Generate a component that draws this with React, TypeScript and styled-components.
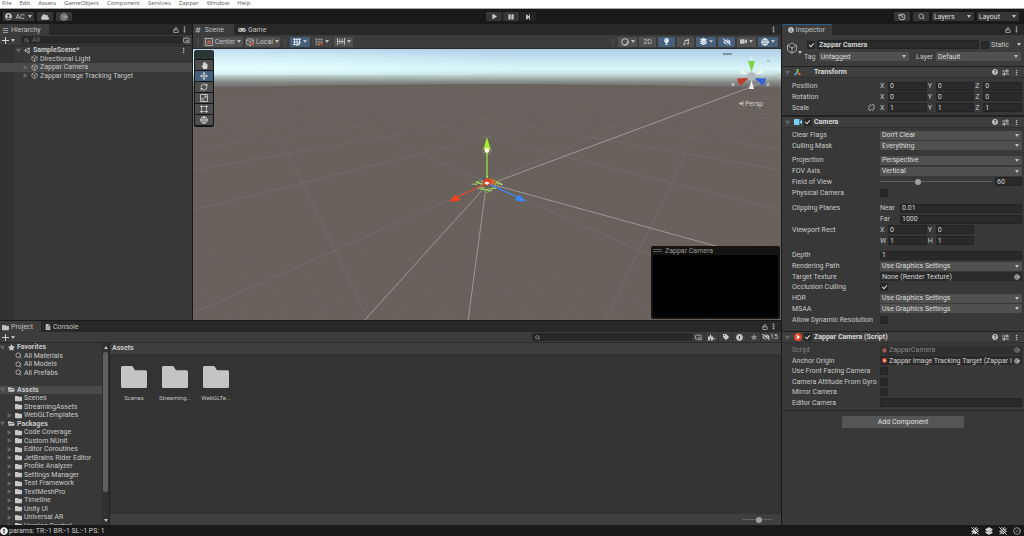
import React from "react";
import styled, { createGlobalStyle, css } from "styled-components";
import {
  Box, Search, History, LockOpen, EllipsisVertical, Move, RefreshCw, Unlink,
  Menu as MenuIcon, PictureInPicture2, CircleCheck, BugOff, Layers2, Globe, Target,
} from "lucide-react";
import {
  FaGamepad, FaUserCircle, FaEyeSlash, FaVideo, FaLightbulb, FaStar, FaTag, FaFolder, FaFolderOpen,
  FaQuestionCircle, FaExclamationCircle, FaInfoCircle, FaCloud, FaUnity, FaHashtag, FaHandPaper, FaPlay,
  FaPause, FaStepForward, FaPuzzlePiece, FaMusic, FaLayerGroup, FaFileAlt,
} from "react-icons/fa";

const Global = createGlobalStyle`
  * { box-sizing: border-box; }
  body { margin: 0; background: #191919; }
  button, input, select { font: inherit; color: inherit; margin: 0; padding: 0; border: 0; border-radius: 0; background: none; min-width: 0; }
  ul { list-style: none; margin: 0; padding: 0; }
  svg { display: block; flex: none; }
`;

const Editor = styled.div`
  height: 100vh;
  display: flex;
  flex-direction: column;
  font: 7px/8px Roboto, "Liberation Sans", sans-serif;
  color: #c8c8c8;
  background: #191919;
  overflow: hidden;
`;

/* ---------- application chrome ---------- */

const MenuBar = styled.nav`
  display: flex;
  gap: 8px;
  height: 9px;
  padding-left: 2px;
  background: #fff;
  border-bottom: 1px solid #a8a8a8;
  font: 6px/8px "Open Sans", "Noto Sans", sans-serif;
  align-items: center;
`;
const MenuLink = styled.a`
  color: #555;
  text-decoration: none;
  line-height: 7px;
  margin-top: -2px;
`;
const TopBar = styled.header`
  display: grid;
  grid-template-columns: 1fr auto 1fr;
  align-items: center;
  height: 15px;
  padding: 0 5px 0 3px;
`;
const BarGroup = styled.div<{ $gap: number; $end?: boolean }>`
  display: flex;
  gap: ${(p) => p.$gap}px;
  justify-content: ${(p) => (p.$end ? "flex-end" : "flex-start")};
`;
const BarButton = styled.button<{ $w: number; $dim?: boolean }>`
  width: ${(p) => p.$w}px;
  height: 9px;
  display: flex;
  align-items: center;
  justify-content: center;
  gap: 3px;
  border-radius: 1px;
  background: ${(p) => (p.$dim ? "#252525" : "#363636")};
  color: #c8c8c8;
`;
const Caret = styled.i<{ $up?: boolean }>`
  width: 0;
  height: 0;
  border: 2px solid transparent;
  border-top: 3px solid #c0c0c0;
  border-bottom: 0;
  flex: none;
  ${(p) => p.$up && css`border-top: 0; border-bottom: 3px solid #c0c0c0;`}
`;

/* ---------- docked windows ---------- */

const Workspace = styled.main`
  flex: 1;
  min-height: 0;
  display: grid;
  grid-template-columns: minmax(0, 1fr) 242px;
  gap: 1px;
`;
const LeftDock = styled.div`
  display: grid;
  grid-template-rows: minmax(0, 1fr) 204px;
  gap: 1px;
  min-height: 0;
`;
const UpperDock = styled.div`
  display: grid;
  grid-template-columns: 192px minmax(0, 1fr);
  gap: 1px;
  min-height: 0;
`;
const Panel = styled.section`
  display: flex;
  flex-direction: column;
  background: #383838;
  min-width: 0;
  min-height: 0;
  overflow: hidden;
`;
const TabRow = styled.div`
  display: flex;
  flex: none;
  height: 11px;
  padding-right: 4px;
  gap: 2px;
  align-items: center;
  background: #282828;
  color: #c0c0c0;
`;
const Tab = styled.button<{ $on?: boolean; $w: number; $focus?: boolean }>`
  width: ${(p) => p.$w}px;
  height: 11px;
  display: flex;
  align-items: center;
  gap: 2px;
  padding-left: 2px;
  white-space: nowrap;
  background: ${(p) => (p.$on ? "#3c3c3c" : "transparent")};
  border-top: 1px solid ${(p) => (p.$focus ? "#2c5d87" : "transparent")};
`;
const Spacer = styled.span`
  flex: 1;
`;
const ToolRow = styled.div<{ $h: number }>`
  display: flex;
  align-items: center;
  height: ${(p) => p.$h}px;
  flex: none;
  background: #3c3c3c;
  border-bottom: 1px solid #2a2a2a;
  padding: 0 2px;
`;
const AddButton = styled.button`
  display: flex;
  align-items: center;
  gap: 2px;
  width: 19px;
  height: 9px;
`;
const SearchBox = styled.label<{ $w?: number }>`
  display: flex;
  align-items: center;
  gap: 3px;
  height: 8px;
  padding-left: 3px;
  background: #282828;
  border-radius: 2px;
  color: #8a8a8a;
  ${(p) => (p.$w ? css`width: ${p.$w}px;` : css`flex: 1;`)}
  input { flex: 1; outline: 0; height: 8px; }
  input::placeholder { color: #6c6c6c; opacity: 1; }
`;

/* ---------- trees ---------- */

const TreeList = styled.ul<{ $h: number }>`
  display: grid;
  grid-auto-rows: 1fr;
  height: ${(p) => p.$h}px;
  flex: none;
`;
const TreeRow = styled.li<{ $indent: number; $on?: boolean; $bold?: boolean }>`
  display: flex;
  align-items: center;
  gap: 2px;
  min-height: 0;
  padding-left: ${(p) => p.$indent}px;
  padding-right: 5px;
  white-space: nowrap;
  font-weight: ${(p) => (p.$bold ? 700 : 400)};
  background: ${(p) => (p.$on ? "#4a4a4a" : "transparent")};
`;
const Fold = styled.span`
  width: 6px;
  flex: none;
  color: #686868;
`;
const HierarchyBody = styled.div`
  flex: 1;
  background: linear-gradient(90deg, #323232 15px, #383838 15px);
`;

/* ---------- scene view ---------- */

const SceneBar = styled(ToolRow)`
  gap: 2px;
  padding: 0 3px 0 2px;
`;
const Chip = styled.button<{ $w: number; $on?: boolean; $flat?: boolean }>`
  width: ${(p) => p.$w}px;
  height: 10px;
  flex: none;
  display: flex;
  align-items: center;
  justify-content: center;
  gap: 2px;
  border-radius: 1px;
  background: ${(p) => (p.$on ? "#46607c" : p.$flat ? "#424242" : "#505050")};
  color: ${(p) => (p.$on ? "#e6eef5" : "#c4c4c4")};
`;
const Grip = styled.span`
  width: 2px;
  height: 8px;
  margin: 0 2px;
  background: #484848;
`;
const Viewport = styled.div`
  position: relative;
  flex: 1;
  min-height: 0;
  background: #68615c;
  > svg { width: 100%; height: 100%; }
`;
const ToolStrip = styled.div`
  position: absolute;
  left: 1px;
  top: 1px;
  width: 20px;
  padding: 10px 1px 2px;
  display: grid;
  gap: 1px;
  background: linear-gradient(#2b3535 9px, #151515 9px);
  border-radius: 2px;
`;
const ToolButton = styled.button<{ $on?: boolean }>`
  height: 10px;
  display: grid;
  place-items: center;
  background: ${(p) => (p.$on ? "#46607c" : "#4e4e4e")};
  color: #d8d8d8;
`;
const Preview = styled.div`
  position: absolute;
  right: 1px;
  bottom: 1px;
  width: 129px;
  height: 73px;
  display: flex;
  flex-direction: column;
  background: #161412;
  border-radius: 2px;
  padding: 0 2px 2px;
  color: #9a9896;
`;
const PreviewTitle = styled.div`
  display: flex;
  gap: 3px;
  align-items: center;
  height: 9px;
`;
const PreviewImage = styled.div`
  flex: 1;
  background: #000;
`;

/* ---------- project window ---------- */

const ProjectBody = styled.div`
  flex: 1;
  min-height: 0;
  display: grid;
  grid-template-columns: 102px 8px minmax(0, 1fr);
`;
const TreePane = styled.div`
  overflow: hidden;
  min-height: 0;
`;
const ScrollTrack = styled.div`
  display: flex;
  flex-direction: column;
  align-items: center;
  justify-content: space-between;
  background: #313131;
  padding: 3px 0;
  border-right: 1px solid #222;
`;
const ScrollThumb = styled.div`
  width: 5px;
  flex: 1;
  margin: 3px 0 27px;
  border-radius: 3px;
  background: #5f5f5f;
`;
const Browser = styled.div`
  display: flex;
  flex-direction: column;
  background: #333;
  min-width: 0;
`;
const Crumb = styled.div`
  height: 11px;
  padding: 1px 2px;
  font-weight: 700;
  background: #3f3f3f;
`;
const AssetGrid = styled.div`
  flex: 1;
  display: flex;
  gap: 7px;
  padding: 12px 7px;
`;
const Asset = styled.figure`
  margin: 0;
  width: 34px;
  display: flex;
  flex-direction: column;
  align-items: center;
  gap: 6px;
  font-size: 6px;
  color: #c0c0c0;
`;
const BrowserFoot = styled.div`
  display: flex;
  align-items: center;
  justify-content: flex-end;
  height: 11px;
  padding-right: 9px;
  background: #3f3f3f;
`;
const Slider = styled.input<{ $w?: number }>`
  appearance: none;
  height: 8px;
  ${(p) => (p.$w ? css`width: ${p.$w}px;` : css`flex: 1;`)}
  background: linear-gradient(#606060, #606060) center / 100% 1px no-repeat;
  &::-webkit-slider-thumb {
    appearance: none;
    width: 6px;
    height: 6px;
    border-radius: 50%;
    background: #a0a0a0;
  }
`;
const FilterButton = styled.button<{ $w: number }>`
  width: ${(p) => p.$w}px;
  height: 10px;
  display: flex;
  align-items: center;
  justify-content: center;
  border-left: 1px solid #303030;
`;

/* ---------- inspector ---------- */

const ObjectHead = styled.div`
  display: grid;
  grid-template-columns: 18px minmax(0, 1fr);
  height: 31px;
  padding: 5px 3px 0 4px;
  background: #3c3c3c;
`;
const ObjectIcon = styled.div`
  display: flex;
  align-items: flex-end;
  height: 14px;
`;
const HeadLines = styled.div`
  display: grid;
  grid-template-columns: minmax(0, 1fr);
  gap: 3px;
  align-content: start;
`;
const HeadLine = styled.div<{ $gap: number; $pad?: number }>`
  display: flex;
  align-items: center;
  gap: ${(p) => p.$gap}px;
  padding-left: ${(p) => p.$pad ?? 0}px;
  height: 9px;
`;
const StaticLabel = styled.label`
  width: 24px;
  flex: none;
`;
const CompHead = styled.header`
  display: flex;
  flex: none;
  align-items: center;
  gap: 1px;
  height: 12px;
  padding: 0 4px 0 1px;
  background: #3e3e3e;
  border-top: 1px solid #1f1f1f;
  border-bottom: 1px solid #303030;
  h2 { margin: 0; font: inherit; font-weight: 700; color: #dadada; flex: 1; padding-left: 1px; }
`;
const HeadSlot = styled.span`
  width: 9px;
  display: grid;
  place-items: center;
`;
const HeadTools = styled.span`
  display: flex;
  gap: 4px;
  align-items: center;
`;
const Fields = styled.div<{ $h: number; $top?: number }>`
  display: grid;
  flex: none;
  grid-auto-rows: 1fr;
  height: ${(p) => p.$h}px;
  margin-top: ${(p) => p.$top ?? 0}px;
  padding: 0 2px 0 10px;
`;
const Field = styled.div<{ $dim?: boolean }>`
  display: grid;
  grid-template-columns: 88px minmax(0, 1fr);
  align-items: center;
  min-height: 0;
  white-space: nowrap;
  opacity: ${(p) => (p.$dim ? 0.5 : 1)};
`;
const FieldName = styled.label`
  display: flex;
  justify-content: space-between;
  align-items: center;
  padding-right: 5px;
`;
const Axes = styled.div`
  display: grid;
  grid-template-columns: repeat(3, minmax(0, 1fr));
  gap: 1px;
`;
const Axis = styled.label<{ $lab?: number }>`
  display: grid;
  grid-template-columns: ${(p) => p.$lab ?? 8}px minmax(0, 1fr);
  align-items: center;
`;
const TextField = styled.input<{ $bold?: boolean }>`
  width: 100%;
  height: 9px;
  padding-left: 1px;
  background: #2a2a2a;
  border: 1px solid #232323;
  border-radius: 1px;
  color: #d2d2d2;
  font-weight: ${(p) => (p.$bold ? 700 : 400)};
`;
const SmallField = styled.span`
  width: 27px;
  flex: none;
`;
const SelectWrap = styled.span<{ $bar?: boolean; $w?: number }>`
  display: grid;
  grid-template-columns: minmax(0, 1fr) 7px;
  align-items: center;
  height: 9px;
  ${(p) => (p.$w ? css`width: ${p.$w}px;` : css`flex: 1;`)}
  background: ${(p) => (p.$bar ? "#363636" : "#505050")};
  border-radius: 1px;
  color: #dcdcdc;
  select { grid-area: 1 / 1 / 2 / 3; appearance: none; height: 9px; padding-left: 2px; outline: 0; width: 100%; }
  i { grid-area: 1 / 2; pointer-events: none; }
`;
const Check = styled.input`
  appearance: none;
  width: 8px;
  height: 8px;
  flex: none;
  display: grid;
  place-items: center;
  background: #292929;
  border: 1px solid #242424;
  border-radius: 1px;
  &:checked::after {
    content: "";
    width: 2px;
    height: 4px;
    border: solid #dcdcdc;
    border-width: 0 1px 1px 0;
    box-sizing: content-box;
    transform: rotate(42deg);
    margin-top: -1px;
  }
`;
const ObjectField = styled.div`
  display: flex;
  align-items: center;
  gap: 2px;
  height: 9px;
  padding: 0 2px;
  background: #2a2a2a;
  border-radius: 1px;
  color: #d2d2d2;
  span { flex: 1; overflow: hidden; }
`;
const AddComponent = styled.button`
  display: block;
  width: 122px;
  height: 12px;
  margin: 5px auto 0;
  background: #555;
  color: #e0e0e0;
  border-radius: 1px;
`;
const FieldRow = styled.div`
  display: flex;
  align-items: center;
  gap: 3px;
`;
const Rule = styled.hr`
  margin: 2px 0 0;
  border: 0;
  border-top: 1px solid #242424;
  width: 100%;
`;
const StatusBar = styled.footer`
  display: flex;
  align-items: center;
  gap: 1px;
  height: 11px;
  padding: 0 3px 0 0;
  color: #d0d0d0;
`;
const StatusIcons = styled.span`
  display: flex;
  gap: 6px;
  margin-left: auto;
`;

/* ---------- small drawings ---------- */

const Tri = ({ open }: { open?: boolean }) => (
  <svg width="5" height="5" viewBox="0 0 5 5" fill="currentColor">
    <path d={open ? "M0 .8h5L2.5 4.8z" : "M.6 0v5l4-2.5z"} />
  </svg>
);
const Plus = () => (
  <svg width="7" height="7" viewBox="0 0 7 7" stroke="#d0d0d0">
    <path d="M3.5 0v7M0 3.5h7" />
  </svg>
);
const Zap = ({ s = 7 }: { s?: number }) => (
  <svg width={s} height={s} viewBox="0 0 8 8">
    <circle cx="4" cy="4" r="3.9" fill="#e5492b" />
    <path d="M2.8 1.4v2l1 .6-1 .6v2L6 4z" fill="#fff" />
  </svg>
);
const AxesIcon = () => (
  <svg width="9" height="8" viewBox="0 0 9 8" fill="none">
    <path d="M4.5 4.5V1" stroke="#8bd04a" strokeWidth="1.8" />
    <path d="M4.2 4.8 1.5 6.8" stroke="#4aa3df" strokeWidth="1.8" />
    <path d="m4.8 4.8 2.7 2" stroke="#e2643c" strokeWidth="1.8" />
  </svg>
);
const CamIcon = () => (
  <svg width="8" height="6" viewBox="0 0 8 6" fill="#7ccdf5">
    <rect width="5.4" height="6" rx=".6" />
    <path d="M5.8 2.4 8 .6v4.8L5.8 3.6z" />
  </svg>
);
const PresetIcon = () => (
  <svg width="7" height="7" viewBox="0 0 7 7" stroke="#c4c4c4" fill="none">
    <path d="M0 2h7M0 5h7" strokeWidth=".9" />
    <path d="M4.8 .3v3.4M2.2 3.300v3.400" strokeWidth="1.1" />
  </svg>
);
const Pivot = ({ cube }: { cube?: boolean }) => (
  <svg width="8" height="8" viewBox="0 0 8 8" fill="none" stroke="#b8b8b8" strokeWidth=".8">
    {cube ? <path d="M4 .5 7.4 2v4L4 7.6.6 6V2zM.6 2 4 3.6 7.4 2M4 3.6v4" /> : <rect x=".5" y=".5" width="7" height="7" />}
    {cube ? <circle cx="5.6" cy="5.6" r="1.6" fill="#c4573a" stroke="none" /> : <path d="M2 6l1.4-1.4M3 3h2.4v2.4H3z" stroke="#d2623f" strokeWidth="1" />}
  </svg>
);
const GridIcon = ({ snap }: { snap?: boolean }) => (
  <svg width="8" height="8" viewBox="0 0 8 8" fill="none" stroke={snap ? "#8d8d8d" : "#f0f4f8"} strokeWidth=".8">
    <path d="M1.500 0v7M4 0v8M6.500 0v5M0 1.500h8M0 4h8M0 6.500h5" />
    {snap ? <path d="M4.500 7.500V5.500q1.200-1.200 2.500 0v2" stroke="#c4573a" strokeWidth="1.100" /> : <path d="M5 7l2-2" strokeWidth="1.200" />}
  </svg>
);
const ShadeIcon = () => (
  <svg width="8" height="8" viewBox="0 0 8 8" fill="none">
    <circle cx="4" cy="4" r="3.300" stroke="#c8c8c8" />
    <path d="M7 2.500A3.500 3.500 0 0 1 2.500 7q3.500-.5 4.500-4.500z" fill="#c8c8c8" />
  </svg>
);
const Ruler = () => (
  <svg width="8" height="7" viewBox="0 0 8 7" stroke="currentColor" fill="none">
    <path d="M.5 0v7M7.5 0v7M0 3.5h8M2.8 1v5M5.2 1v5" strokeWidth=".9" />
  </svg>
);
const RectTool = () => (
  <svg width="8" height="8" viewBox="0 0 8 8" stroke="currentColor" fill="none">
    <path d="M1.5 0v8M6.5 0v8M0 1.5h8M0 6.5h8" strokeWidth=".7" />
  </svg>
);
const ScaleTool = () => (
  <svg width="8" height="8" viewBox="0 0 8 8" stroke="currentColor" fill="none" strokeWidth=".8">
    <path d="M.5 .5h7v7h-7zM.5 4.800h2.700v2.700M3.800 4.200 5.800 2.200M4.200 2h1.800v1.800" />
  </svg>
);
const FolderShape = () => (
  <svg width="26" height="22" viewBox="0 0 26 22" fill="#c4c4c4">
    <path d="M1.5 0h9.2q.8 0 1.2.7L14 4.2h10.5Q26 4.2 26 5.7v14.8q0 1.5-1.5 1.5h-23Q0 22 0 20.500V1.500Q0 0 1.500 0z" />
  </svg>
);

/* Ground grid in two-point perspective: cell (i, j) projected to the viewport. */
const STEP = 0.393;
const project = (i: number, j: number): [number, number] => {
  const w = 1 + STEP * (i + j);
  return [(294 + STEP * (529 * i + 59 * j)) / w, (134 + STEP * 30 * (i + j)) / w];
};
const gridPath = (from: number, to: number, step: number) => {
  let d = "";
  for (let n = from; n <= to; n += step) {
    const near = (0.1 - 1) / STEP - n;
    const a = project(n, near);
    const b = project(near, n);
    d += `M${a[0].toFixed(1)} ${a[1].toFixed(1)}L59 30M${b[0].toFixed(1)} ${b[1].toFixed(1)}L529 30`;
  }
  return d;
};

/* Speckled tracking target lying on the ground at the origin. */
const marker = Array.from({ length: 130 }, (_, k) => {
  const u = ((k * 37) % 101) / 50 - 1;
  const v = ((k * 61) % 97) / 48 - 1;
  return {
    x: 293 + (u - v) * 8,
    y: 136 + (u + v) * 4,
    c: ["#b7d957", "#dfe27a", "#7fae5c", "#3d4a3c", "#7fb3b8", "#a9c94f", "#55603f"][k % 7],
  };
});

const SceneDrawing = () => (
  <svg viewBox="0 0 588 271" preserveAspectRatio="xMidYMid slice" fill="none">
    <defs>
      <linearGradient id="sky" x1="0" y1="0" x2="0" y2="1">
        <stop offset="0" stopColor="#b0cde7" />
        <stop offset=".25" stopColor="#c4e2f0" />
        <stop offset=".52" stopColor="#d9f7f8" />
        <stop offset=".64" stopColor="#c6e0e0" />
        <stop offset=".85" stopColor="#868a87" />
        <stop offset="1" stopColor="#6c6766" />
      </linearGradient>
      <radialGradient id="glow" gradientUnits="userSpaceOnUse" cx="0" cy="0" r="1" gradientTransform="translate(40 18) scale(300 26)">
        <stop offset="0" stopColor="#e6ffff" stopOpacity=".8" />
        <stop offset="1" stopColor="#dffcff" stopOpacity="0" />
      </radialGradient>
      <linearGradient id="fade" gradientUnits="userSpaceOnUse" x1="0" y1="36" x2="0" y2="120">
        <stop offset="0" stopColor="#fff" stopOpacity=".05" />
        <stop offset="1" stopColor="#fff" />
      </linearGradient>
      <linearGradient id="fadeLow" gradientUnits="userSpaceOnUse" x1="0" y1="130" x2="0" y2="272">
        <stop offset="0" stopColor="#fff" stopOpacity="0" />
        <stop offset="1" stopColor="#fff" />
      </linearGradient>
      <mask id="far"><rect y="35" width="588" height="240" fill="url(#fade)" /></mask>
      <mask id="near"><rect y="110" width="588" height="165" fill="url(#fadeLow)" /></mask>
    </defs>
    <rect width="588" height="272" fill="#68615c" />
    <path d="M0 0H588V39Q294 31 0 39z" fill="url(#sky)" />
    <path d="M0 0H588V26H0z" fill="url(#glow)" />
    <path d={gridPath(-12, 14, 1)} stroke="#8b8b89" strokeWidth=".8" strokeOpacity=".4" mask="url(#far)" />
    <path d={gridPath(-4, 4, 0.1)} stroke="#918e8b" strokeWidth=".5" strokeOpacity=".16" mask="url(#near)" />
    <g stroke="#b3afab" strokeWidth=".9" strokeOpacity=".8">
      <path d="M294 136 558 38 588 25M294 134 588 215M292 138 171 272M293 138 275 272" />
    </g>
    {marker.map((m, k) => <rect key={k} x={m.x} y={m.y - 1} width="2" height="1.200" fill={m.c} />)}
    <path d="M287 133a6 6 0 0 1 7-4" stroke="#2e4fa0" />
    <path d="m295 129 5 1 3 3-1 3-4-1z" fill="#c8672f" />
    <path d="M294 133V98" stroke="#93e23e" strokeWidth="1.300" />
    <path d="M294 88l3.500 12q-3.500 2-7 0z" fill="#a4f02f" />
    <circle cx="294" cy="101.500" r="4" stroke="#cfc9a0" strokeDasharray="1 1.500" />
    <circle cx="294" cy="101.500" r="2.400" fill="#fdf8dd" />
    <path d="M292 135l-28 13" stroke="#e2492d" strokeWidth="1.200" />
    <path d="M256 152.500l6.500-7 5 5.500q-5 2-11.500 1.500z" fill="#f0431f" />
    <path d="M296 135l28 13" stroke="#3f83ee" strokeWidth="1.200" />
    <path d="M333 152.500l-7-7-4 5.500q5 2 11 1.500z" fill="#3d86fa" />
    <path d="M290 131l4-2 4 2v4l-4 2-4-2z" fill="#dc3a26" />
    <path d="M291 134l3-1.500 3 1.500-3 2z" fill="#f2f2f2" />
    <rect x="530" y="4" width="9" height="2" fill="#82939c" />
    <rect x="574" y="11" width="3" height="2" fill="#b4c2c6" />
    <path d="m554.500 25-6-4.500-1.500 4zM562.500 25l6-4.500 1.500 4z" fill="#f4f6f6" />
    <path d="m558.500 31-2.500 9h5z" fill="#ececec" />
    <path d="m556 29-12 .5q1 5 3.500 7z" fill="#bf3d2c" />
    <path d="m561 29 12 .5q-1 5-3.500 7z" fill="#3564d8" />
    <path d="M554.500 25l4-2 4 2v5l-4 2-4-2z" fill="#b4b8b9" />
    <path d="M555 12h7l-3.500 11z" fill="#7dd340" />
    <g fill="#eef3f4" fontFamily="Roboto, sans-serif" fontSize="6" textAnchor="middle">
      <text x="558" y="10">y</text>
      <text x="540" y="37">x</text>
      <text x="575" y="37">z</text>
    </g>
    <path d="M551 52.500l-5 2 5 2M546 54.500h5" stroke="#c5c3c1" strokeWidth=".8" />
    <text x="552" y="57" fontFamily="Roboto, sans-serif" fontSize="7" fill="#d0cecc">Persp</text>
  </svg>
);

/* ---------- shared pieces ---------- */

const WindowTools = () => (
  <>
    <LockOpen size={6} strokeWidth={3} />
    <EllipsisVertical size={7} strokeWidth={4} />
  </>
);

const Select = ({ label, value, bar, w }: { label: string; value: string; bar?: boolean; w?: number }) => (
  <SelectWrap $bar={bar} $w={w}>
    <select id={label} aria-label={label} defaultValue={value}><option>{value}</option></select>
    <Caret />
  </SelectWrap>
);

const Row = ({ name, extra, dim, children }: { name: string; extra?: React.ReactNode; dim?: boolean; children: React.ReactNode }) => (
  <Field $dim={dim}>
    <FieldName htmlFor={name}>{name}{extra}</FieldName>
    {children}
  </Field>
);

const Vec = ({ id, parts }: { id: string; parts: [string, string][] }) => (
  <Axes>
    {parts.map(([k, v], n) => (
      <Axis key={k}>{k}<TextField id={n === 0 ? id : undefined} defaultValue={v} /></Axis>
    ))}
  </Axes>
);

const SelectRow = ({ name, value }: { name: string; value: string }) => (
  <Row name={name}><Select label={name} value={value} /></Row>
);
const CheckRow = ({ name, on }: { name: string; on?: boolean }) => (
  <Row name={name}><Check id={name} type="checkbox" defaultChecked={on} /></Row>
);

const Component = ({ title, icon, check }: { title: string; icon: React.ReactNode; check?: boolean }) => (
  <CompHead>
    <HeadSlot><Fold><Tri open /></Fold></HeadSlot>
    <HeadSlot>{icon}</HeadSlot>
    <HeadSlot>{check && <Check type="checkbox" defaultChecked aria-label={`Enable ${title}`} />}</HeadSlot>
    <h2>{title}</h2>
    <HeadTools>
      <FaQuestionCircle size={6} />
      <PresetIcon />
      <EllipsisVertical size={7} strokeWidth={3} />
    </HeadTools>
  </CompHead>
);

type Node = { t: string; kind?: "root" | "find" | "leaf" | "gap"; on?: boolean; star?: boolean };
const tree: Node[] = [
  { t: "Favorites", kind: "root", star: true },
  { t: "All Materials", kind: "find" },
  { t: "All Models", kind: "find" },
  { t: "All Prefabs", kind: "find" },
  { t: "", kind: "gap" },
  { t: "Assets", kind: "root", on: true },
  { t: "Scenes", kind: "leaf" },
  { t: "StreamingAssets", kind: "leaf" },
  { t: "WebGLTemplates" },
  { t: "Packages", kind: "root" },
  ...["Code Coverage", "Custom NUnit", "Editor Coroutines", "JetBrains Rider Editor", "Profile Analyzer", "Settings Manager",
    "Test Framework", "TextMeshPro", "Timeline", "Unity UI", "Universal AR", "Version Control"].map((t) => ({ t })),
];

const ProjectNode = ({ n }: { n: Node }) => {
  if (n.kind === "gap") return <TreeRow $indent={0} aria-hidden />;
  const root = n.kind === "root";
  const icon = n.star ? <FaStar size={7} /> : root ? <FaFolderOpen size={7} /> : n.kind === "find" ? <Search size={7} strokeWidth={2.5} /> : <FaFolder size={7} />;
  return (
    <TreeRow $indent={root ? 0 : 7} $on={n.on} $bold={root}>
      <Fold>{(root || !n.kind) && <Tri open={root} />}</Fold>
      {icon}
      {n.t}
    </TreeRow>
  );
};

const Hierarchy = () => (
  <Panel>
    <TabRow>
      <Tab $on $w={49}><MenuIcon size={7} strokeWidth={2.5} />Hierarchy</Tab>
      <Spacer />
      <WindowTools />
    </TabRow>
    <ToolRow $h={11}>
      <AddButton aria-label="Create"><Plus /><Caret /></AddButton>
      <SearchBox><Search size={5} strokeWidth={3} /><input placeholder="All" aria-label="Search hierarchy" /></SearchBox>
      <PictureInPicture2 size={7} strokeWidth={2.5} />
    </ToolRow>
    <HierarchyBody>
      <TreeList $h={34}>
        <TreeRow $indent={16} $bold><Fold><Tri open /></Fold><FaUnity size={7} />SampleScene*<Spacer /><EllipsisVertical size={7} strokeWidth={3} /></TreeRow>
        <TreeRow $indent={23}><Fold /><Box size={7} strokeWidth={2} />Directional Light</TreeRow>
        <TreeRow $indent={23} $on><Fold><Tri /></Fold><Box size={7} strokeWidth={2} />Zappar Camera</TreeRow>
        <TreeRow $indent={23}><Fold><Tri /></Fold><Box size={7} strokeWidth={2} />Zappar Image Tracking Target</TreeRow>
      </TreeList>
    </HierarchyBody>
  </Panel>
);

const Scene = () => (
  <Panel>
    <TabRow>
      <Tab $on $w={41}><FaHashtag size={6} />&nbsp;Scene</Tab>
      <Tab $w={30}><FaGamepad size={8} />Game</Tab>
      <Spacer />
      <EllipsisVertical size={7} strokeWidth={4} />
    </TabRow>
    <SceneBar $h={14}>
      <Grip />
      <Chip $w={40}><Pivot />Center<Caret /></Chip>
      <Chip $w={35}><Pivot cube />Local<Caret /></Chip>
      <Grip />
      <Chip $w={20} $on aria-label="Grid"><GridIcon /><Caret /></Chip>
      <Chip $w={20} $flat aria-label="Snap"><GridIcon snap /><Caret /></Chip>
      <Chip $w={19} aria-label="Increment"><Ruler /><Caret /></Chip>
      <Spacer />
      <Grip />
      <Chip $w={19} aria-label="Shading"><ShadeIcon /><Caret /></Chip>
      <Chip $w={17}>2D</Chip>
      <Chip $w={17} $on aria-label="Lighting"><FaLightbulb size={7} /></Chip>
      <Chip $w={17} aria-label="Audio"><FaMusic size={6} /></Chip>
      <Chip $w={20} $on aria-label="Effects"><FaLayerGroup size={7} /><Caret /></Chip>
      <Chip $w={17} $on aria-label="Visibility"><FaEyeSlash size={8} /></Chip>
      <Chip $w={19} aria-label="Camera"><FaVideo size={7} /><Caret /></Chip>
      <Chip $w={20} $on aria-label="Gizmos"><Globe size={8} strokeWidth={3} /><Caret /></Chip>
    </SceneBar>
    <Viewport>
      <SceneDrawing />
      <ToolStrip>
        <ToolButton aria-label="Hand"><FaHandPaper size={7} /></ToolButton>
        <ToolButton $on aria-label="Move"><Move size={8} strokeWidth={3} /></ToolButton>
        <ToolButton aria-label="Rotate"><RefreshCw size={8} strokeWidth={2.5} /></ToolButton>
        <ToolButton aria-label="Scale"><ScaleTool /></ToolButton>
        <ToolButton aria-label="Rect"><RectTool /></ToolButton>
        <ToolButton aria-label="Transform"><Globe size={8} strokeWidth={2.5} /></ToolButton>
      </ToolStrip>
      <Preview>
        <PreviewTitle>
          <svg width="9" height="3" viewBox="0 0 9 3" stroke="#6c6a68"><path d="M0 .5h9M0 2.500h9" strokeWidth=".8" /></svg>
          Zappar Camera
        </PreviewTitle>
        <PreviewImage />
      </Preview>
    </Viewport>
  </Panel>
);

const Project = () => (
  <Panel>
    <TabRow>
      <Tab $on $w={41}><FaFolder size={7} />Project</Tab>
      <Tab $w={40}><FaFileAlt size={6} />Console</Tab>
      <Spacer />
      <WindowTools />
    </TabRow>
    <ToolRow $h={11}>
      <AddButton aria-label="Create asset"><Plus /><Caret /></AddButton>
      <Spacer />
      <SearchBox $w={160}><Search size={5} strokeWidth={4} /><input aria-label="Search project" /></SearchBox>
      <FilterButton $w={12} aria-label="Search window"><PictureInPicture2 size={7} strokeWidth={2.5} /></FilterButton>
      <FilterButton $w={14} aria-label="Type"><FaPuzzlePiece size={7} /></FilterButton>
      <FilterButton $w={14} aria-label="Label"><FaTag size={6} /></FilterButton>
      <FilterButton $w={14} aria-label="Log"><FaExclamationCircle size={7} /></FilterButton>
      <FilterButton $w={14} aria-label="Favorite"><FaStar size={6} color="#8c8c8c" /></FilterButton>
      <FilterButton $w={19}><FaEyeSlash size={8} />15</FilterButton>
    </ToolRow>
    <ProjectBody>
      <TreePane>
        <TreeList $h={187}>{tree.map((n, k) => <ProjectNode key={k} n={n} />)}</TreeList>
      </TreePane>
      <ScrollTrack><Caret $up /><ScrollThumb /><Caret /></ScrollTrack>
      <Browser>
        <Crumb>Assets</Crumb>
        <AssetGrid>
          {["Scenes", "Streaming...", "WebGLTe..."].map((t) => (
            <Asset key={t}><FolderShape /><figcaption>{t}</figcaption></Asset>
          ))}
        </AssetGrid>
        <BrowserFoot><Slider $w={30} type="range" defaultValue={60} aria-label="Icon size" /></BrowserFoot>
      </Browser>
    </ProjectBody>
  </Panel>
);

const Inspector = () => (
  <Panel>
    <TabRow>
      <Tab $on $focus $w={50}>&nbsp;<FaInfoCircle size={6} />Inspector</Tab>
      <Spacer />
      <WindowTools />
    </TabRow>
    <ObjectHead>
      <ObjectIcon><Box size={12} strokeWidth={1.5} /><Caret /></ObjectIcon>
      <HeadLines>
        <HeadLine $gap={2} $pad={3}>
          <Check type="checkbox" defaultChecked aria-label="Active" />
          <TextField $bold defaultValue="Zappar Camera" aria-label="Name" />
          <Check type="checkbox" id="static" />
          <StaticLabel htmlFor="static">Static</StaticLabel>
          <Caret />
        </HeadLine>
        <HeadLine $gap={3}>
          <label htmlFor="Tag">Tag</label>
          <Select label="Tag" value="Untagged" w={90} />
          <Spacer />
          <label htmlFor="Layer">Layer</label>
          <Select label="Layer" value="Default" w={85} />
        </HeadLine>
      </HeadLines>
    </ObjectHead>
    <Component title="Transform" icon={<AxesIcon />} />
    <Fields $h={32} $top={3}>
      <Row name="Position"><Vec id="Position" parts={[["X", "0"], ["Y", "0"], ["Z", "0"]]} /></Row>
      <Row name="Rotation"><Vec id="Rotation" parts={[["X", "0"], ["Y", "0"], ["Z", "0"]]} /></Row>
      <Row name="Scale" extra={<Unlink size={7} strokeWidth={2.5} />}><Vec id="Scale" parts={[["X", "1"], ["Y", "1"], ["Z", "1"]]} /></Row>
    </Fields>
    <Rule as="div" />
    <Component title="Camera" icon={<CamIcon />} check />
    <Fields $h={21} $top={2}>
      <SelectRow name="Clear Flags" value="Don't Clear" />
      <SelectRow name="Culling Mask" value="Everything" />
    </Fields>
    <Fields $h={43} $top={4}>
      <SelectRow name="Projection" value="Perspective" />
      <SelectRow name="FOV Axis" value="Vertical" />
      <Row name="Field of View">
        <FieldRow>
          <Slider id="Field of View" type="range" min={0} max={180} defaultValue={60} />
          <SmallField><TextField defaultValue="60" aria-label="Field of View value" /></SmallField>
        </FieldRow>
      </Row>
      <CheckRow name="Physical Camera" />
    </Fields>
    <Fields $h={43} $top={5}>
      <Row name="Clipping Planes"><Axis $lab={20}>Near<TextField id="Clipping Planes" defaultValue="0.01" /></Axis></Row>
      <Field><span /><Axis $lab={20}>Far<TextField defaultValue="1000" /></Axis></Field>
      <Row name="Viewport Rect"><Vec id="Viewport Rect" parts={[["X", "0"], ["Y", "0"]]} /></Row>
      <Field><span /><Vec id="viewport-size" parts={[["W", "1"], ["H", "1"]]} /></Field>
    </Fields>
    <Fields $h={75} $top={4}>
      <Row name="Depth"><TextField id="Depth" defaultValue="1" /></Row>
      <SelectRow name="Rendering Path" value="Use Graphics Settings" />
      <Row name="Target Texture"><ObjectField><span>None (Render Texture)</span><Target size={6} strokeWidth={2.5} /></ObjectField></Row>
      <CheckRow name="Occlusion Culling" on />
      <SelectRow name="HDR" value="Use Graphics Settings" />
      <SelectRow name="MSAA" value="Use Graphics Settings" />
      <CheckRow name="Allow Dynamic Resolution" />
    </Fields>
    <Fields $h={6} />
    <Component title="Zappar Camera (Script)" icon={<Zap s={8} />} check />
    <Fields $h={63} $top={2}>
      <Row name="Script" dim><ObjectField><Zap s={5} /><span>ZapparCamera</span><Target size={6} strokeWidth={2.5} /></ObjectField></Row>
      <Row name="Anchor Origin"><ObjectField><Zap s={5} /><span>Zappar Image Tracking Target (Zappar Image Tracking Target)</span><Target size={6} strokeWidth={2.5} /></ObjectField></Row>
      <CheckRow name="Use Front Facing Camera" />
      <CheckRow name="Camera Attitude From Gyro" />
      <CheckRow name="Mirror Camera" />
      <Row name="Editor Camera"><TextField id="Editor Camera" /></Row>
    </Fields>
    <Rule />
    <AddComponent>Add Component</AddComponent>
  </Panel>
);

export default function App() {
  return (
    <Editor>
      <Global />
      <MenuBar>
        {["File", "Edit", "Assets", "GameObject", "Component", "Services", "Zappar", "Window", "Help"].map((m) => (
          <MenuLink key={m} href="#">{m}</MenuLink>
        ))}
      </MenuBar>
      <TopBar>
        <BarGroup $gap={3}>
          <BarButton $w={31}><FaUserCircle size={7} />AC<Caret /></BarButton>
          <BarButton $w={16} aria-label="Cloud"><FaCloud size={8} /></BarButton>
          <BarButton $w={16} aria-label="Services"><Target size={8} /></BarButton>
        </BarGroup>
        <BarGroup $gap={1}>
          <BarButton $w={16} aria-label="Play"><FaPlay size={5} /></BarButton>
          <BarButton $w={16} aria-label="Pause"><FaPause size={6} /></BarButton>
          <BarButton $w={16} $dim aria-label="Step"><FaStepForward size={6} /></BarButton>
        </BarGroup>
        <BarGroup $gap={3} $end>
          <BarButton $w={16} aria-label="History"><History size={8} strokeWidth={2.5} /></BarButton>
          <BarButton $w={16} aria-label="Search"><Search size={7} strokeWidth={2.5} /></BarButton>
          <Select label="Layers" value="Layers" bar w={42} />
          <Select label="Layout" value="Layout" bar w={42} />
        </BarGroup>
      </TopBar>
      <Workspace>
        <LeftDock>
          <UpperDock>
            <Hierarchy />
            <Scene />
          </UpperDock>
          <Project />
        </LeftDock>
        <Inspector />
      </Workspace>
      <StatusBar>
        <FaExclamationCircle size={8} color="#eee" />
        params: TR:-1 BR:-1 SL:-1 PS: 1
        <StatusIcons>
          <BugOff size={8} strokeWidth={3} fill="currentColor" />
          <Layers2 size={8} strokeWidth={3} fill="currentColor" />
          <BugOff size={8} strokeWidth={3} />
          <CircleCheck size={8} />
        </StatusIcons>
      </StatusBar>
    </Editor>
  );
}
